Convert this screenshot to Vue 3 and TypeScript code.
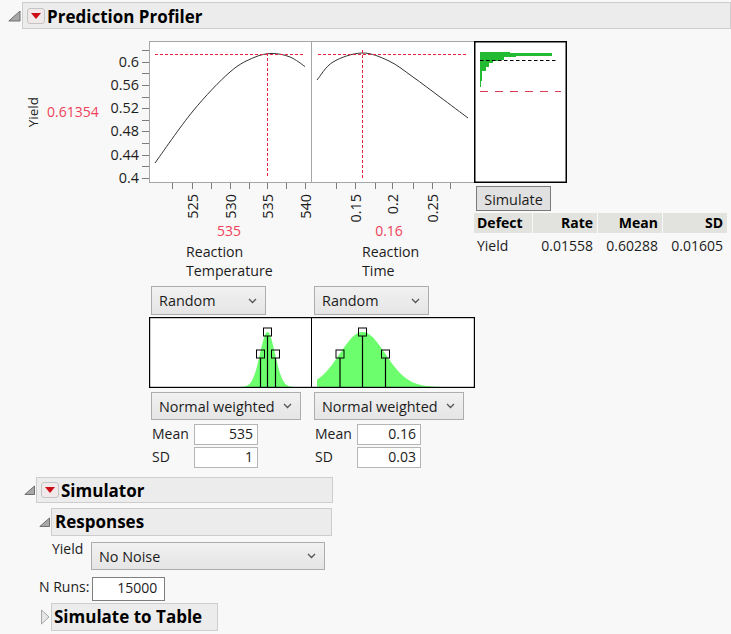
<script setup lang="ts">
function smooth(p: number[][]): string {
  let d = `M${p[0][0]} ${p[0][1]}`
  for (let i = 0; i < p.length - 1; i++) {
    const a = p[Math.max(i - 1, 0)]
    const b = p[i]
    const c = p[i + 1]
    const e = p[Math.min(i + 2, p.length - 1)]
    const c1x = b[0] + (c[0] - a[0]) / 6
    const c1y = b[1] + (c[1] - a[1]) / 6
    const c2x = c[0] - (e[0] - b[0]) / 6
    const c2y = c[1] - (e[1] - b[1]) / 6
    d += ` C${c1x.toFixed(1)} ${c1y.toFixed(1)} ${c2x.toFixed(1)} ${c2y.toFixed(1)} ${c[0]} ${c[1]}`
  }
  return d
}
const yTicks = [
  { y: 9 }, { y: 21, t: '0.6' }, { y: 32.5 }, { y: 44, t: '0.56' }, { y: 56 }, { y: 67, t: '0.52' },
  { y: 79 }, { y: 90, t: '0.48' }, { y: 102 }, { y: 114, t: '0.44' }, { y: 125 }, { y: 137, t: '0.4' },
]
const xTicks = [
  { x: 23.5 }, { x: 43.5, t: '525' }, { x: 62 }, { x: 81.5, t: '530' }, { x: 100 }, { x: 118.5, t: '535' },
  { x: 137 }, { x: 156.5, t: '540' }, { x: 187 }, { x: 206, t: '0.15' }, { x: 226 }, { x: 243, t: '0.2' },
  { x: 264 }, { x: 283, t: '0.25' }, { x: 301 },
]
const curveA = smooth([[6, 122], [44, 70], [81, 31], [105, 16.5], [123, 12.5], [141, 16], [156, 25.5]])
const curveB = smooth([[168, 39], [184, 21], [213, 12], [240, 20], [264, 36], [291, 56], [319, 77]])
const bars = [
  [11, 30], [12, 72], [15, 36], [16, 24], [19, 19], [20, 13], [22, 9], [26, 6], [30, 2], [40, 1],
]
const histHeights = [1, 3, 1, 3, 1, 2, 4, 4, 10, 6]
const histRects = bars.map((b, i) => ({ y: b[0], w: b[1], h: histHeights[i] }))

function gauss(mean: number, sd: number, from: number, to: number): string {
  const base = 70
  const peak = 55
  const out: string[] = [`${from},${base}`]
  for (let x = from; x <= to; x += 1) {
    const z = (x - mean) / sd
    out.push(`${x},${(base - peak * Math.exp((-z * z) / 2)).toFixed(1)}`)
  }
  out.push(`${to},${base}`)
  return out.join(' ')
}
const gaussA = gauss(118.5, 7.5, 85, 160)
const gaussB = gauss(213.5, 22.7, 168, 300)
const handles = [
  { x: 111.5, y: 37 }, { x: 118.5, y: 15 }, { x: 126.5, y: 37 },
  { x: 191, y: 37 }, { x: 213.5, y: 15 }, { x: 236.5, y: 37 },
]
</script>

<template>
  <div class="page">
    <div class="outline l0">
      <svg class="tri" width="13" height="12" viewBox="0 0 13 12"><path d="M0.8 11 L12 1 V11 Z" /></svg>
      <div class="head big">
        <span class="menu"><i></i></span>
        <span class="title">Prediction Profiler</span>
      </div>
    </div>

    <div class="profiler">
      <div class="prof-left">
        <div class="top-row">
          <div class="resp">
            <span class="resp-name">Yield</span>
            <span class="red resp-val">0.61354</span>
          </div>
          <svg class="y-axis" width="49" height="142" viewBox="0 0 49 142">
            <g v-for="t in yTicks" :key="t.y">
              <line x1="42" x2="49" :y1="t.y" :y2="t.y" class="tick" />
              <text v-if="t.t" x="39" :y="t.y + 5" text-anchor="end" class="axis-text">{{ t.t }}</text>
            </g>
          </svg>
          <svg class="plot" width="326" height="142" viewBox="0 0 326 142">
            <rect x="0.5" y="0.5" width="325" height="141" fill="#fff" stroke="#a6a6a6" />
            <line x1="162.5" x2="162.5" y1="0" y2="142" stroke="#a6a6a6" />
            <path :d="curveA" class="curve" />
            <path :d="curveB" class="curve" />
            <line x1="6" x2="155" y1="13.5" y2="13.5" class="redline" />
            <line x1="169" x2="317" y1="13.5" y2="13.5" class="redline" />
            <line x1="118.5" x2="118.5" y1="12" y2="137" class="redline" />
            <line x1="213.5" x2="213.5" y1="9" y2="137" class="redline" />
          </svg>
        </div>

        <svg class="x-axis" width="326" height="39" viewBox="0 0 326 39">
          <g v-for="t in xTicks" :key="t.x">
            <line :x1="t.x" :x2="t.x" y1="0" y2="6" class="tick" />
            <text v-if="t.t" text-anchor="end" class="axis-text" :transform="`translate(${t.x + 5.5},11) rotate(-90)`">{{ t.t }}</text>
          </g>
        </svg>

        <div class="factors names">
          <div class="name-a">
            <div class="red val-a">535</div>
            <div class="fname">Reaction<br />Temperature</div>
          </div>
          <div class="name-b">
            <div class="red val-b">0.16</div>
            <div class="fname">Reaction<br />Time</div>
          </div>
        </div>

        <div class="factors sel-row">
          <div class="select random">Random<svg class="chev" width="9" height="6" viewBox="0 0 9 6"><path d="M1 1 L4.5 4.5 L8 1" /></svg></div>
          <div class="select random">Random<svg class="chev" width="9" height="6" viewBox="0 0 9 6"><path d="M1 1 L4.5 4.5 L8 1" /></svg></div>
        </div>

        <svg class="dist" width="326" height="71" viewBox="0 0 326 71">
          <rect x="0.75" y="0.75" width="324.5" height="69.5" fill="#fff" />
          <polygon :points="gaussA" class="bell" />
          <polygon :points="gaussB" class="bell" />
          <rect x="0.6" y="0.6" width="324.8" height="69.8" fill="none" stroke="#000" stroke-width="1.2" />
          <line x1="162.5" x2="162.5" y1="0" y2="71" stroke="#000" stroke-width="1" />
          <g v-for="h in handles" :key="h.x">
            <line :x1="h.x" :x2="h.x" :y1="h.y + 4" y2="70" class="handle-line" />
            <rect :x="h.x - 4" :y="h.y - 4" width="8" height="8" class="handle" />
          </g>
        </svg>

        <div class="factors sel-row2">
          <div class="select weighted">Normal weighted<svg class="chev" width="9" height="6" viewBox="0 0 9 6"><path d="M1 1 L4.5 4.5 L8 1" /></svg></div>
          <div class="select weighted">Normal weighted<svg class="chev" width="9" height="6" viewBox="0 0 9 6"><path d="M1 1 L4.5 4.5 L8 1" /></svg></div>
        </div>

        <div class="factors params">
          <div class="param-col">
            <div class="param"><span class="plabel">Mean</span><span class="input pinput">535</span></div>
            <div class="param"><span class="plabel">SD</span><span class="input pinput">1</span></div>
          </div>
          <div class="param-col">
            <div class="param"><span class="plabel">Mean</span><span class="input pinput">0.16</span></div>
            <div class="param"><span class="plabel">SD</span><span class="input pinput">0.03</span></div>
          </div>
        </div>
      </div>

      <div class="prof-right">
        <svg class="sim-plot" width="93" height="142" viewBox="0 0 93 142">
          <rect x="0.75" y="0.75" width="91.5" height="140.5" fill="#fff" stroke="#000" stroke-width="1.5" />
          <rect v-for="r in histRects" :key="r.y" x="6" :y="r.y" :width="r.w" :height="r.h" fill="#22bb33" />
          <line x1="6" x2="84" y1="19.5" y2="19.5" stroke="#000" stroke-dasharray="3.5 2.5" />
          <line x1="6" x2="87" y1="50.5" y2="50.5" stroke="#dc3a55" stroke-dasharray="8 7" />
        </svg>
        <button class="sim-btn" type="button">Simulate</button>
        <div class="table">
          <div class="th left">Defect</div>
          <div class="th">Rate</div>
          <div class="th">Mean</div>
          <div class="th">SD</div>
          <div class="td left">Yield</div>
          <div class="td">0.01558</div>
          <div class="td">0.60288</div>
          <div class="td">0.01605</div>
        </div>
      </div>
    </div>

    <div class="outline l1">
      <svg class="tri" width="11" height="10" viewBox="0 0 11 10"><path d="M0.8 9.5 L10.5 1 V9.5 Z" /></svg>
      <div class="head sim-head">
        <span class="menu"><i></i></span>
        <span class="title">Simulator</span>
      </div>
    </div>

    <div class="outline l2">
      <svg class="tri" width="11" height="10" viewBox="0 0 11 10"><path d="M0.8 9.5 L10.5 1 V9.5 Z" /></svg>
      <div class="head resp-head"><span>Responses</span></div>
    </div>

    <div class="noise-row">
      <span class="noise-label">Yield</span>
      <div class="select noise">No Noise<svg class="chev" width="9" height="6" viewBox="0 0 9 6"><path d="M1 1 L4.5 4.5 L8 1" /></svg></div>
    </div>

    <div class="runs-row">
      <span class="runs-label">N Runs:</span>
      <span class="input runs">15000</span>
    </div>

    <div class="outline l3">
      <svg class="tri-closed" width="10" height="16" viewBox="0 0 10 16"><path d="M1.5 1 L9 8 L1.5 15 Z" /></svg>
      <div class="head table-head"><span>Simulate to Table</span></div>
    </div>
  </div>
</template>

<style>
html, body { margin: 0; background: #f8f8f8; }
</style>

<style scoped>
.page {
  width: 731px;
  height: 634px;
  overflow: hidden;
  background: #f8f8f8;
  padding-top: 2px;
  box-sizing: border-box;
  font-family: "Open Sans", "Noto Sans", sans-serif;
  font-size: 14px;
  line-height: 20px;
  color: #1c1c1c;
}
.outline { display: flex; align-items: center; }
.l0 { padding-left: 8px; gap: 0; }
.tri { flex: none; margin-right: 1px; align-self: center; }
.tri path { fill: #a8a8a8; stroke: #6f6f6f; stroke-width: 1; }
.tri-closed path { fill: #e6e6e6; stroke: #a8a8a8; stroke-width: 1; }
.head {
  box-sizing: border-box;
  display: flex;
  align-items: center;
  background: #ececec;
  border: 1px solid #cdcdcd;
  font-weight: 700;
  font-size: 17px;
  color: #000;
  white-space: nowrap;
}
.title { margin-top: 2px; }
.big { width: 710px; height: 27px; padding-left: 4px; }
.menu {
  box-sizing: border-box;
  width: 18px;
  height: 16px;
  margin-right: 2px;
  border: 1px solid #c4c4c4;
  border-radius: 3px;
  background: #f1e9e9;
  display: flex;
  align-items: center;
  justify-content: center;
}
.menu i {
  width: 0;
  height: 0;
  border-left: 5px solid transparent;
  border-right: 5px solid transparent;
  border-top: 6px solid #cc0c14;
}
.profiler { display: flex; margin-top: 12px; height: 436px; }
.prof-left { width: 474px; flex: none; }
.top-row { display: flex; height: 142px; }
.resp { width: 100px; flex: none; box-sizing: border-box; padding-left: 26px; display: flex; align-items: center; }
.resp-name {
  writing-mode: vertical-rl;
  transform: rotate(180deg);
  font-size: 13.5px;
  line-height: 14px;
  margin-right: 7px;
}
.resp-val { font-size: 14px; }
.red { color: #ef3f5a; }
.axis-text { font-size: 14.4px; fill: #1c1c1c; }
.tick { stroke: #7d7d7d; stroke-width: 1; shape-rendering: crispEdges; }
.y-axis, .plot, .x-axis, .dist, .sim-plot { display: block; flex: none; overflow: visible; }
.curve { fill: none; stroke: #333; stroke-width: 1; }
.redline { stroke: #e8213f; stroke-width: 1; stroke-dasharray: 3 2; shape-rendering: crispEdges; }
.x-axis { margin-left: 149px; }
.factors { display: grid; grid-template-columns: 163px 163px; margin-left: 149px; }
.names { height: 61px; margin-top: -1px; }
.name-a { padding-left: 37px; }
.name-b { padding-left: 50px; }
.val-a { width: 86px; text-align: center; }
.val-b { width: 54px; text-align: center; }
.fname { font-size: 14.2px; line-height: 19px; margin-top: 1px; }
.sel-row { margin-top: 4px; }
.select {
  box-sizing: border-box;
  display: flex;
  align-items: center;
  justify-content: space-between;
  border: 1px solid #adadad;
  background: linear-gradient(#f1f1f1, #e5e5e5);
  padding: 0 8px 0 7px;
  font-size: 14.4px;
  white-space: nowrap;
  margin-left: 2px;
}
.chev { fill: none; flex: none; }
.chev path { fill: none; stroke: #555; stroke-width: 1.3; }
.random { width: 115px; height: 29px; }
.dist { margin: 2px 0 0 149px; }
.bell { fill: #6dfe6d; }
.handle-line { stroke: #000; stroke-width: 1.2; }
.handle { fill: none; stroke: #000; stroke-width: 1; }
.sel-row2 { margin-top: 4px; }
.weighted { width: 150px; height: 28px; padding-top: 2px; }
.weighted .chev { margin-top: -3px; }
.params { margin-top: 4px; }
.param-col { display: flex; flex-direction: column; gap: 2px; margin-left: 3px; }
.param { display: flex; align-items: center; height: 21px; }
.plabel { width: 42px; flex: none; padding-bottom: 2px; }
.input {
  box-sizing: border-box;
  display: block;
  text-align: right;
  background: #fff;
  border: 1px solid #b5b5b5;
}
.pinput { width: 64px; height: 21px; padding-right: 4px; line-height: 18px; }
.prof-right { flex: none; width: 256px; }
.sim-btn {
  display: block;
  box-sizing: border-box;
  width: 75px;
  height: 25px;
  margin: 3px 0 2px 2px;
  padding: 1px 0 0;
  font-family: inherit;
  font-size: 14.4px;
  color: #1c1c1c;
  background: #e1e1e1;
  border: 1.5px solid #7a7a7a;
  border-radius: 0;
}
.table {
  display: grid;
  grid-template-columns: 58px 64px 64px 64px;
  column-gap: 1px;
  width: 253px;
}
.th {
  background: #e2e2de;
  font-weight: 700;
  color: #000;
  height: 20px;
  text-align: right;
  padding-right: 4px;
  box-sizing: border-box;
}
.td { height: 26px; line-height: 26px; text-align: right; padding-right: 4px; box-sizing: border-box; }
.left { text-align: left; padding-left: 3px; padding-right: 0; }
.l1 { padding-left: 24px; }
.sim-head { width: 297px; height: 26px; padding-left: 4px; }
.l2 { margin-top: 5px; padding-left: 39px; }
.resp-head { width: 281px; height: 28px; padding-left: 3px; }
.noise-row { display: flex; margin: 6px 0 0 52px; align-items: flex-start; }
.noise-label { width: 39px; flex: none; margin-top: -3px; }
.noise { width: 234px; height: 28px; margin-left: 0; padding-top: 1px; }
.noise .chev { margin-top: -1px; }
.runs-row { display: flex; align-items: center; margin: 7px 0 0 39px; gap: 3px; }
.runs-label { padding-bottom: 4px; }
.runs { width: 73px; height: 24px; padding-right: 7px; line-height: 19px; border-color: #7f7f7f; }
.l3 { margin-top: 2px; padding-left: 40px; }
.tri-closed { flex: none; margin-right: 1px; }
.table-head { width: 167px; height: 28px; padding-left: 2px; }
</style>
